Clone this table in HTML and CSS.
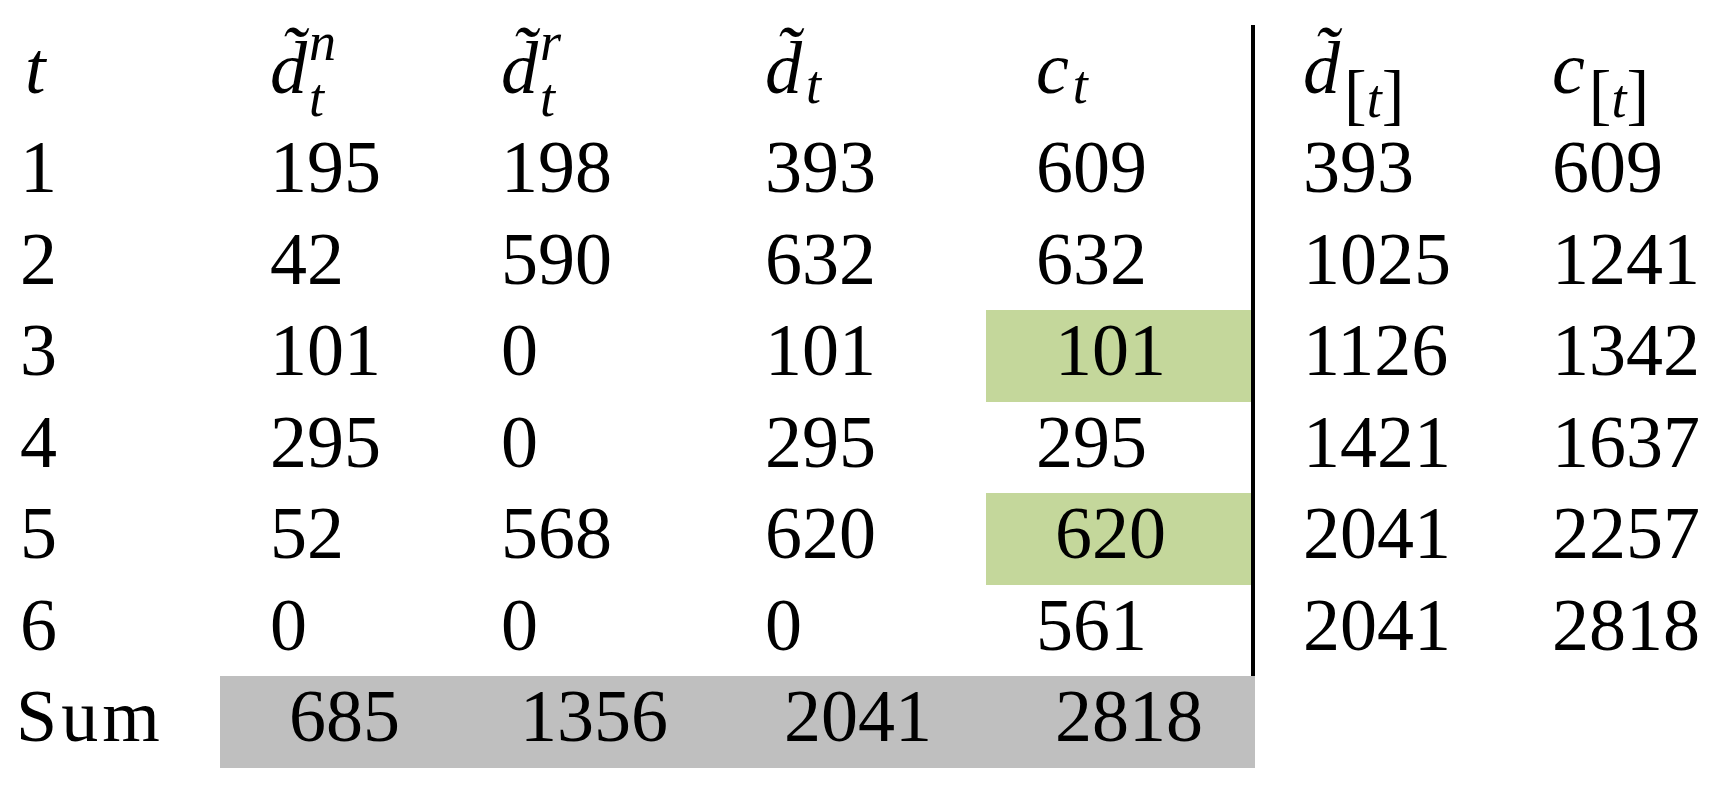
FILE: index.html
```html
<!DOCTYPE html>
<html lang="en">
<head>
  <meta charset="UTF-8">
  <meta name="viewport" content="width=device-width, initial-scale=1.0">
  <link rel="stylesheet" href="styles.css">
  <title>Demand table</title>
</head>
<body>
  <div class="sheet">
    <!-- header -->
    <div class="row head">
      <div class="cell first"><i>t</i></div>
      <div class="cell"><i>d&#771;</i><span class="stack"><i class="up">n</i><i class="down">t</i></span></div>
      <div class="cell"><i>d&#771;</i><span class="stack"><i class="up">r</i><i class="down">t</i></span></div>
      <div class="cell"><i>d&#771;</i><i class="low">t</i></div>
      <div class="cell"><i>c</i><i class="low">t</i></div>
      <div class="cell split"><i>d&#771;</i><span class="idx"><span class="br">[</span><i>t</i><span class="br">]</span></span></div>
      <div class="cell"><i>c</i><span class="idx"><span class="br">[</span><i>t</i><span class="br">]</span></span></div>
    </div>

    <div class="row">
      <div class="cell first">1</div>
      <div class="cell">195</div>
      <div class="cell">198</div>
      <div class="cell">393</div>
      <div class="cell">609</div>
      <div class="cell split">393</div>
      <div class="cell">609</div>
    </div>
    <div class="row">
      <div class="cell first">2</div>
      <div class="cell">42</div>
      <div class="cell">590</div>
      <div class="cell">632</div>
      <div class="cell">632</div>
      <div class="cell split">1025</div>
      <div class="cell">1241</div>
    </div>
    <div class="row">
      <div class="cell first">3</div>
      <div class="cell">101</div>
      <div class="cell">0</div>
      <div class="cell">101</div>
      <div class="cell green">101</div>
      <div class="cell split">1126</div>
      <div class="cell">1342</div>
    </div>
    <div class="row">
      <div class="cell first">4</div>
      <div class="cell">295</div>
      <div class="cell">0</div>
      <div class="cell">295</div>
      <div class="cell">295</div>
      <div class="cell split">1421</div>
      <div class="cell">1637</div>
    </div>
    <div class="row">
      <div class="cell first">5</div>
      <div class="cell">52</div>
      <div class="cell">568</div>
      <div class="cell">620</div>
      <div class="cell green">620</div>
      <div class="cell split">2041</div>
      <div class="cell">2257</div>
    </div>
    <div class="row">
      <div class="cell first">6</div>
      <div class="cell">0</div>
      <div class="cell">0</div>
      <div class="cell">0</div>
      <div class="cell">561</div>
      <div class="cell split">2041</div>
      <div class="cell">2818</div>
    </div>

    <!-- totals -->
    <div class="row sum">
      <div class="cell first wide">Sum</div>
      <div class="cell grey">685</div>
      <div class="cell grey">1356</div>
      <div class="cell grey">2041</div>
      <div class="cell grey">2818</div>
      <div class="cell split end"></div>
      <div class="cell"></div>
    </div>
  </div>
</body>
</html>
```

FILE: styles.css
```css
body {
  margin: 0;
  background: #fff;
  color: #000;
  font-family: 'Liberation Serif', 'Times New Roman', serif;
  font-size: 74px;
}

.sheet {
  display: grid;
  grid-template-columns: 220px 231px 264px 271px 265px 251px 226px;
  grid-template-rows: 102px repeat(7, 91.5px);
  margin-top: 25px;
}

.row {
  display: contents;
}

.cell {
  box-sizing: border-box;
  padding-left: 50px;
  line-height: 80px;
  white-space: nowrap;
}

.cell.first {
  padding-left: 20px;
}

.cell.wide {
  padding-left: 16px;
  letter-spacing: 4px;
}

.head .cell {
  padding-top: 3px;
}

.head .cell.first {
  padding-left: 25px;
}

.split {
  border-left: 4px solid #000;
  padding-left: 48px;
}

.split.end {
  border-left-color: #bfbfbf;
}

.green {
  background: #c4d79b;
  padding-left: 69px;
}

.grey {
  background: #bfbfbf;
  padding-left: 69px;
}

.stack {
  display: inline-flex;
  flex-direction: column;
  vertical-align: top;
  font-size: 54px;
  line-height: 54px;
  margin-left: 2px;
}

.stack .up {
  margin-top: -13px;
}

.stack .down {
  margin-top: 2px;
}

.low {
  font-size: 54px;
  vertical-align: -10px;
  line-height: 0;
  margin-left: 4px;
}

.idx {
  vertical-align: -24px;
  line-height: 0;
  margin-left: 4px;
}

.idx i {
  font-size: 54px;
}

.idx .br {
  font-size: 68px;
}
```
